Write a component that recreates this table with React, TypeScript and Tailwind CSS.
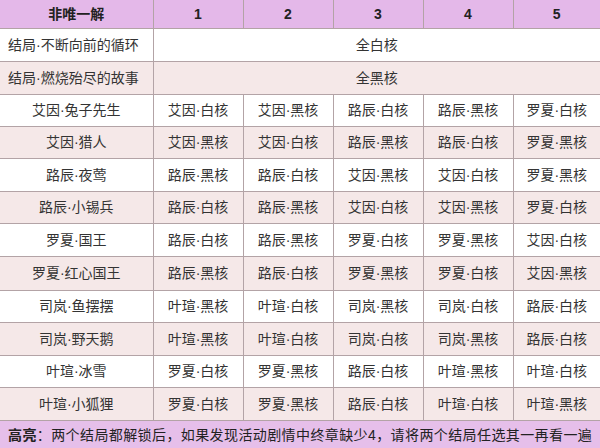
import React from 'react';

const rows: string[][] = [
  ['艾因·兔子先生', '艾因·白核', '艾因·黑核', '路辰·白核', '路辰·黑核', '罗夏·白核'],
  ['艾因·猎人', '艾因·黑核', '艾因·白核', '路辰·黑核', '路辰·白核', '罗夏·黑核'],
  ['路辰·夜莺', '路辰·黑核', '路辰·白核', '艾因·黑核', '艾因·白核', '罗夏·黑核'],
  ['路辰·小锡兵', '路辰·白核', '路辰·黑核', '艾因·白核', '艾因·黑核', '罗夏·白核'],
  ['罗夏·国王', '路辰·白核', '路辰·黑核', '罗夏·白核', '罗夏·黑核', '艾因·白核'],
  ['罗夏·红心国王', '路辰·黑核', '路辰·白核', '罗夏·黑核', '罗夏·白核', '艾因·黑核'],
  ['司岚·鱼摆摆', '叶瑄·黑核', '叶瑄·白核', '司岚·黑核', '司岚·白核', '路辰·白核'],
  ['司岚·野天鹅', '叶瑄·黑核', '叶瑄·白核', '司岚·白核', '司岚·黑核', '路辰·白核'],
  ['叶瑄·冰雪', '罗夏·白核', '罗夏·黑核', '路辰·白核', '叶瑄·黑核', '叶瑄·白核'],
  ['叶瑄·小狐狸', '罗夏·白核', '罗夏·黑核', '路辰·白核', '叶瑄·白核', '叶瑄·黑核'],
];

// heights keep row lines on the same pixels as the screenshot
const rowH = ['h-[32px]', 'h-[32px]', 'h-[33px]', 'h-[32px]', 'h-[33px]', 'h-[34px]', 'h-[32px]', 'h-[33px]', 'h-[32px]', 'h-[33px]'];

const cell = 'border border-[#b3a3a6] text-center align-middle p-0';

export default function App() {
  return (
    <div
      className="w-[600px] h-[448px] overflow-hidden bg-white text-[14px] text-[#333] leading-none"
      style={{ fontFamily: '"Liberation Sans", "Noto Sans CJK SC", sans-serif' }}
    >
      <table className="w-[600px] table-fixed border-collapse">
        <colgroup>
          <col className="w-[153px]" />
          <col className="w-[90px]" />
          <col className="w-[90px]" />
          <col className="w-[90px]" />
          <col className="w-[90px]" />
          <col className="w-[87px]" />
        </colgroup>
        <thead>
          <tr className="h-[28px] bg-[#e4b8e9] font-bold text-[#222]">
            <th className={`${cell} border-t-0 border-l-0`}>非唯一解</th>
            <th className={`${cell} border-t-0`}>1</th>
            <th className={`${cell} border-t-0`}>2</th>
            <th className={`${cell} border-t-0`}>3</th>
            <th className={`${cell} border-t-0`}>4</th>
            <th className={`${cell} border-t-0 border-r-0`}>5</th>
          </tr>
        </thead>
        <tbody>
          <tr className="h-[33px] bg-white">
            <td className={`${cell} border-l-0 text-left pl-[8px]`}>结局·不断向前的循环</td>
            <td colSpan={5} className={`${cell} border-r-0`}>全白核</td>
          </tr>
          <tr className="h-[33px] bg-[#f5e8e8]">
            <td className={`${cell} border-l-0 text-left pl-[8px]`}>结局·燃烧殆尽的故事</td>
            <td colSpan={5} className={`${cell} border-r-0`}>全黑核</td>
          </tr>
          {rows.map((r, i) => (
            <tr key={i} className={`${rowH[i]} ${i % 2 === 0 ? 'bg-white' : 'bg-[#f5e8e8]'}`}>
              {r.map((t, j) => (
                <td
                  key={j}
                  className={`${cell} ${j === 0 ? 'border-l-0' : ''} ${j === 5 ? 'border-r-0' : ''}`}
                >
                  {t}
                </td>
              ))}
            </tr>
          ))}
        </tbody>
      </table>
      <div className="h-[28px] bg-[#e6bfea] flex items-center pl-[8px] text-[#222] tracking-[0.4px] whitespace-nowrap">
        <span className="font-bold">高亮</span>
        <span>：两个结局都解锁后，如果发现活动剧情中终章缺少4，请将两个结局任选其一再看一遍</span>
      </div>
    </div>
  );
}
